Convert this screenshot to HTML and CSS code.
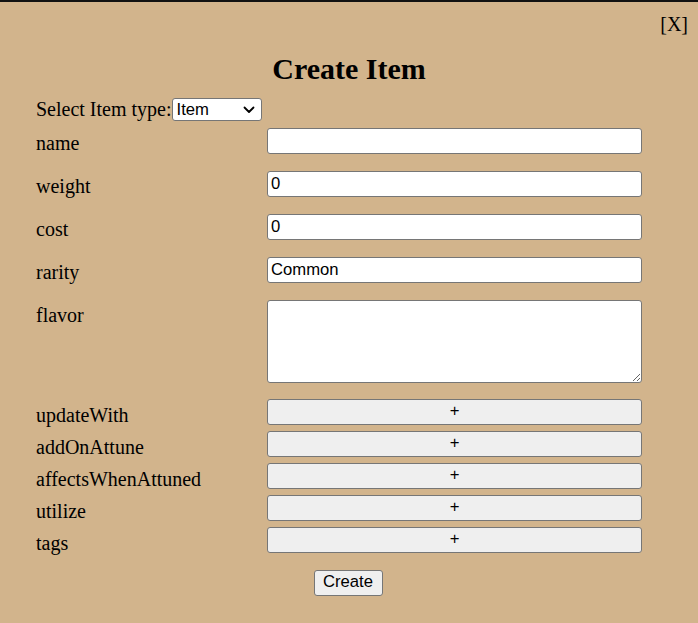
FILE: index.html
```html
<!DOCTYPE html>
<html lang="en">
<head>
<meta charset="utf-8">
<title>Create Item</title>
<link rel="stylesheet" href="styles.css">
</head>
<body>
<div class="modal">
  <div class="close-row"><span class="close">[X]</span></div>
  <h2 class="title">Create Item</h2>
  <div class="type-row">
    <label class="type-label" for="type">Select Item type:</label>
    <span class="select-wrap">
      <select class="type-select" id="type"><option>Item</option></select>
      <svg class="chevron" width="12" height="8" viewBox="0 0 12 8" aria-hidden="true"><path d="M1.5 1.5 L6 6 L10.5 1.5" fill="none" stroke="#000" stroke-width="1.8" stroke-linecap="round" stroke-linejoin="round"/></svg>
    </span>
  </div>
  <div class="fields">
    <div class="field field-text"><label class="field-label">name</label><input class="text-input" type="text" value=""></div>
    <div class="field field-text"><label class="field-label">weight</label><input class="text-input" type="text" value="0"></div>
    <div class="field field-text"><label class="field-label">cost</label><input class="text-input" type="text" value="0"></div>
    <div class="field field-text"><label class="field-label">rarity</label><input class="text-input" type="text" value="Common"></div>
    <div class="field field-area"><label class="field-label">flavor</label><textarea class="text-area"></textarea></div>
    <div class="field field-list"><label class="field-label">updateWith</label><button class="add-btn" type="button">+</button></div>
    <div class="field field-list"><label class="field-label">addOnAttune</label><button class="add-btn" type="button">+</button></div>
    <div class="field field-list"><label class="field-label">affectsWhenAttuned</label><button class="add-btn" type="button">+</button></div>
    <div class="field field-list"><label class="field-label">utilize</label><button class="add-btn" type="button">+</button></div>
    <div class="field field-list field-last"><label class="field-label">tags</label><button class="add-btn" type="button">+</button></div>
  </div>
  <div class="actions"><button class="create-btn" type="button">Create</button></div>
</div>
</body>
</html>
```

FILE: styles.css
```css
html, body {
  margin: 0;
  padding: 0;
  background: #d2b48c;
}

body {
  font-family: "Liberation Serif", "Times New Roman", serif;
  font-size: 20px;
  color: #000;
}

.modal {
  border-top: 2px solid #111;
  padding-top: 11px;
  background: #d2b48c;
}

.close-row {
  text-align: right;
  padding-right: 10px;
  line-height: 23px;
}

.close {
  cursor: pointer;
}

.title {
  margin: 16px 0 0;
  font-size: 30px;
  line-height: 34px;
  font-weight: bold;
  text-align: center;
}

.type-row {
  margin-top: 12px;
  padding-left: 36px;
  display: flex;
  align-items: center;
  height: 23px;
  line-height: 23px;
}

.select-wrap {
  position: relative;
  display: block;
  width: 90px;
  height: 23px;
}

.type-select {
  -webkit-appearance: none;
  appearance: none;
  box-sizing: border-box;
  display: block;
  width: 90px;
  height: 23px;
  margin: 0;
  font-family: "Liberation Sans", Arial, sans-serif;
  font-size: 16.67px;
  color: #000;
  background-color: #fff;
  border: 1px solid #767676;
  border-radius: 3px;
  padding: 0 4px;
  line-height: 21px;
}

.chevron {
  position: absolute;
  right: 7px;
  top: 8px;
  pointer-events: none;
}

.fields {
  margin-top: 7px;
}

.field {
  display: grid;
  grid-template-columns: 231px 375px;
  padding-left: 36px;
}

.field-label {
  box-sizing: border-box;
  line-height: 23px;
  overflow: visible;
}

.field-text {
  height: 26px;
  margin-bottom: 17px;
}

.field-text .field-label {
  padding-top: 4px;
  height: 26px;
}

.field-area {
  height: 83px;
  margin-bottom: 16px;
}

.field-area .field-label {
  padding-top: 4px;
  height: 83px;
}

.field-list {
  height: 26px;
  margin-bottom: 6px;
}

.field-list .field-label {
  padding-top: 5px;
  height: 26px;
}

.field-last {
  margin-bottom: 0;
}

.text-input,
.text-area {
  box-sizing: border-box;
  width: 375px;
  margin: 0;
  border: 1px solid #767676;
  border-radius: 3px;
  background: #fff;
  font-family: "Liberation Sans", Arial, sans-serif;
  font-size: 16.67px;
  color: #000;
  padding: 1px 3px;
}

.text-input {
  height: 26px;
}

.text-area {
  height: 83px;
  display: block;
}

.add-btn,
.create-btn {
  box-sizing: border-box;
  margin: 0;
  background: #efefef;
  border: 1px solid #767676;
  border-radius: 3px;
  font-family: "Liberation Sans", Arial, sans-serif;
  font-size: 16.67px;
  color: #000;
  line-height: 18px;
}

.add-btn {
  width: 375px;
  height: 26px;
  padding: 0 0 3px;
}

.actions {
  margin-top: 16px;
  text-align: center;
  padding-right: 2px;
}

.create-btn {
  width: 69px;
  height: 26px;
  padding: 0 0 1px;
}
```
